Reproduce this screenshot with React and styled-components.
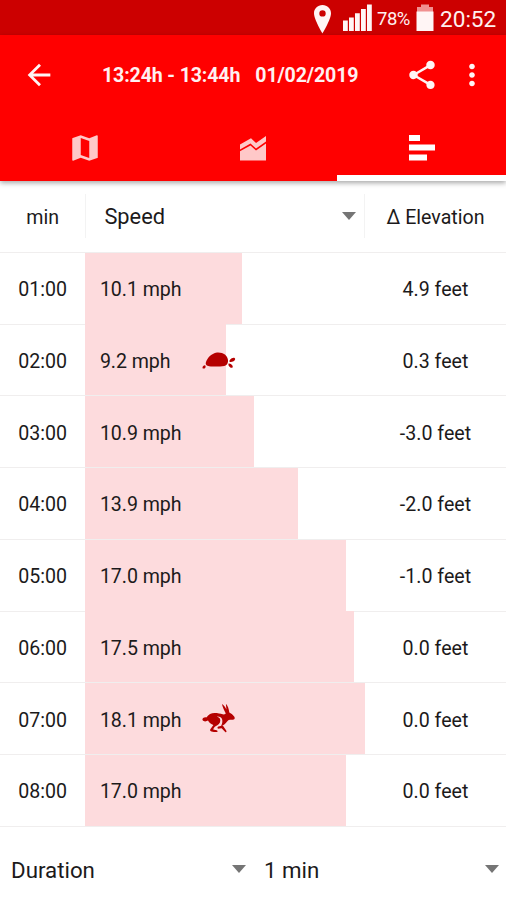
import React from "react";
import styled, { createGlobalStyle } from "styled-components";

const GlobalStyle = createGlobalStyle`
  *, *::before, *::after { box-sizing: border-box; }
  html, body { margin: 0; padding: 0; background: #fff; overflow: hidden; }
  body { font-family: Roboto, sans-serif; color: #1c1a1b; }
`;

const Screen = styled.main`
  width: 506px;
  height: 900px;
  display: flex;
  flex-direction: column;
  background: #fff;
  overflow: hidden;
`;

const StatusBar = styled.div`
  flex: none;
  height: 35px;
  display: flex;
  align-items: center;
  justify-content: flex-end;
  padding: 2px 9px 0 0;
  background: #cc0000;
  color: #fff0f0;
`;

const BatteryLevel = styled.span`
  width: 34px;
  margin: 0 5px 0 5px;
  font-size: 18.5px;
  letter-spacing: -0.5px;
  white-space: nowrap;
`;

const Clock = styled.span`
  width: 57px;
  margin-left: 6px;
  font-size: 22.6px;
  line-height: 33px;
  padding-top: 1px;
  white-space: nowrap;
`;

const Header = styled.header`
  flex: none;
  height: 146px;
  background: #ff0000;
  color: #fff0f0;
  box-shadow: 0 2px 5px rgba(0, 0, 0, 0.35);
`;

const AppBar = styled.div`
  height: 80px;
  display: flex;
  align-items: center;
  padding: 0 17px 0 22px;
`;

const Title = styled.h1`
  flex: 1;
  display: flex;
  gap: 15px;
  margin: 1px 0 0 46px;
  font-size: 19.6px;
  font-weight: 700;
  letter-spacing: -0.14px;
  white-space: nowrap;
`;

const IconButton = styled.button`
  flex: none;
  width: 34px;
  height: 34px;
  margin: 0 ${(p) => p.$gap || 0}px 0 0;
  padding: 0;
  border: 0;
  background: none;
  color: #fff5f5;
  svg { display: block; }
`;

const Tabs = styled.nav`
  height: 66px;
  display: grid;
  grid-template-columns: 169px 168px 169px;
`;

const Tab = styled.button`
  display: flex;
  justify-content: center;
  align-items: flex-start;
  padding: 16px 0 0;
  border: 0;
  border-bottom: 6px solid ${(p) => (p.$active ? "#fff" : "transparent")};
  background: none;
  color: ${(p) => (p.$active ? "#fff" : "#ffc8c8")};
`;

const Row = styled.div`
  flex: none;
  height: 71.75px;
  display: grid;
  grid-template-columns: 85.4px 279.6px 141px;
  align-items: stretch;
  border-bottom: 1px solid #f0eeee;
  font-size: 19.6px;
`;

const HeadRow = styled(Row)`
  height: 71.75px;
`;

const Cell = styled.div`
  display: flex;
  align-items: center;
  justify-content: center;
  padding-top: 3px;
  white-space: nowrap;
`;

const HeadCell = styled(Cell)`
  padding-top: 2px;
`;

const Select = styled.div`
  display: flex;
  align-items: center;
  justify-content: space-between;
  font-size: 22.3px;
`;

const ColumnSelect = styled(Select)`
  margin: 13px 0 14px;
  padding: 2px 8px 0 18px;
  font-size: 21.8px;
  border-left: 1px solid #f3f3f3;
  border-right: 1px solid #f3f3f3;
`;

const Bar = styled.div`
  display: flex;
  align-items: center;
  width: ${(p) => p.$width}px;
  margin-top: -0.25px;
  padding: 3px 0 0 14.5px;
  background: #fddbdd;
  white-space: nowrap;
  svg { flex: none; margin: -2px 0 0 20px; overflow: visible; }
`;

const Footer = styled.footer`
  flex: 1;
  display: grid;
  grid-template-columns: 253px 253px;
  padding-top: 14px;
`;

const FooterSelect = styled(Select)`
  padding: 0 7px 0 11px;
`;

const Caret = styled.span`
  width: 0;
  height: 0;
  margin-top: -2px;
  border: 7px solid transparent;
  border-top: 8px solid #757575;
  border-bottom-width: 0;
`;

const MIcon = ({ d, size = 34 }) => (
  <svg width={size} height={size} viewBox="0 0 24 24" fill="currentColor">
    <path d={d} />
  </svg>
);

const StatusIcons = () => (
  <svg width="62" height="33" viewBox="0 0 62 33" fill="#fff5f5">
    <path
      fillRule="evenodd"
      d="M12.5 3C7.5 3 4 6.7 4 11.3 4 17.5 12.5 31.5 12.5 31.5S21 17.5 21 11.3C21 6.7 17.5 3 12.5 3Zm0 5.2a3.2 3.2 0 1 1 0 6.4 3.2 3.2 0 0 1 0-6.4Z"
    />
    <path d="M33 18.5h4.8V29H33zM39 15.5h4.8V29H39zM45 11.3h4.8V29H45zM51 7h4.8v22H51zM57 2.5h4.8V29H57z" />
  </svg>
);

const Battery = () => (
  <svg width="18" height="33" viewBox="0 0 18 33">
    <path fill="#f09090" d="M5 2.5h8V5h4v5H1V5h4z" />
    <path fill="#fff5f5" d="M.5 9.5h17V29H.5z" />
  </svg>
);

const ChartIcon = () => (
  <svg width="26" height="34" viewBox="0 0 26 34" fill="currentColor">
    <path d="M0 13.4 11 7.3l5 4.6L26 5v5.4l-10 7-5.5-4.8L0 18.5z" />
    <path d="m0 20.3 10.5-5.8 5.5 5 10-7v17H0z" />
  </svg>
);

const BarsIcon = () => (
  <svg width="26" height="34" viewBox="0 0 26 34" fill="currentColor">
    <path d="M0 4h11v6H0zM0 13.5h26v6H0zM0 23.5h18v6H0z" />
  </svg>
);

const Turtle = () => (
  <svg width="34" height="20" viewBox="0 0 34 20" fill="#b50000">
    <path d="M3.8 12.8C5 8.5 9 3.6 15 2.6c6-.5 10.5 2.7 11 7.4.2 2-.3 4-2 5.2-2 1.4-5.2 1.1-8 1.3-4.2.3-7.8 0-10.5-.8-1.4-.5-2-1.4-1.7-2.9Z" />
    <path d="M28 9.8c1.2-1.5 3.5-2.4 4.6-1.7 1.2.8.5 2.4-1 3.2-1.6.8-3.4 1-4 .5-.4-.4-.1-1.2.4-2ZM26.6 13.4c1.8-.2 4.2 1.6 4.2 3.3-.1 1.6-2 1.2-3 .2-1-1-1.8-2-1.2-3.5ZM2.9 15.3c1.1.3.8 1.8.3 2.6-.7.9-2.6.9-2.7-.2 0-1.1 1.2-2.2 2.4-2.4Z" />
  </svg>
);

const Rabbit = () => (
  <svg width="34" height="32" viewBox="0 0 34 32" fill="#b50000">
    <path d="M23.8 10.5C21.8 6.8 20.4 3.5 20 1.1c1.8.9 3.3 3 4.4 5.4L23.9.7c1.9 2.1 3 5.3 3.4 8.7 1.7.9 3.4 2.1 4.4 3.7 1 1 1.5 2.4.5 3.1-1.4.8-3.8.2-5.5.9-1.2.6-2.2 2.6-4.1 4.2-1.2 1-2.4 1.4-3.6 1.8 1.4-2.3 1.7-4.6 1-7-.6-1.7-2.5-2.9-5.2-2.5 2.3.7 3.5 2 3.5 3.8 0 2.9-2.2 4.6-4.7 5.8-1.2.6-1.6 1.6-2.4 3.2l3.4.8c1.5.5 1.5 1.7-.1 1.7-2.7.1-4.7-.2-6-1-1.1-.8.2-2.3 1.1-3.4l1.8-2.5c-2.2-.7-4.4-2.1-5.4-4.4-1.8 1.2-4.8 1-5.5-.5-.5-1.5 1.3-3 3.9-2.7C6.6 11.5 9.2 10 12.6 10c3.2 0 5.8.7 8 1.3 1.2.3 2.3-.1 3.2-.8Z" />
    <path d="m16.4 23.6 4.4-1.2 3.4 5.2c.8 1.4 0 2.3-1.2 1.2l-3.4-3.6-3.6.5c-.9-.6-.7-1.6.4-2.1Z" />
  </svg>
);

const rows = [
  { min: "01:00", speed: "10.1 mph", width: 157, elevation: "4.9 feet" },
  { min: "02:00", speed: "9.2 mph", width: 140.5, elevation: "0.3 feet", slow: true },
  { min: "03:00", speed: "10.9 mph", width: 168.5, elevation: "-3.0 feet" },
  { min: "04:00", speed: "13.9 mph", width: 213, elevation: "-2.0 feet" },
  { min: "05:00", speed: "17.0 mph", width: 260.5, elevation: "-1.0 feet" },
  { min: "06:00", speed: "17.5 mph", width: 269, elevation: "0.0 feet" },
  { min: "07:00", speed: "18.1 mph", width: 280, elevation: "0.0 feet", fast: true },
  { min: "08:00", speed: "17.0 mph", width: 260.5, elevation: "0.0 feet" },
];

const SpeedLabel = styled.span`
  flex: none;
  width: 82px;
  letter-spacing: -0.05px;
`;

export default function App() {
  return (
    <Screen>
      <GlobalStyle />
      <StatusBar>
        <StatusIcons />
        <BatteryLevel>78%</BatteryLevel>
        <Battery />
        <Clock>20:52</Clock>
      </StatusBar>
      <Header>
        <AppBar>
          <IconButton aria-label="Back">
            <MIcon d="M20 11H7.83l5.59-5.59L12 4l-8 8 8 8 1.41-1.41L7.83 13H20v-2z" />
          </IconButton>
          <Title>
            <span>13:24h - 13:44h</span>
            <span>01/02/2019</span>
          </Title>
          <IconButton aria-label="Share" $gap={16}>
            <MIcon d="M18 16.08c-.76 0-1.44.3-1.96.77L8.91 12.7c.05-.23.09-.46.09-.7s-.04-.47-.09-.7l7.05-4.11c.54.5 1.25.81 2.04.81 1.66 0 3-1.34 3-3s-1.34-3-3-3-3 1.34-3 3c0 .24.04.47.09.7L8.04 9.81C7.5 9.31 6.79 9 6 9c-1.66 0-3 1.34-3 3s1.34 3 3 3c.79 0 1.5-.31 2.04-.81l7.12 4.16c-.05.21-.08.43-.08.65 0 1.61 1.31 2.92 2.92 2.92 1.61 0 2.92-1.31 2.92-2.92s-1.31-2.92-2.92-2.92z" />
          </IconButton>
          <IconButton aria-label="More">
            <MIcon d="M12 8c1.1 0 2-.9 2-2s-.9-2-2-2-2 .9-2 2 .9 2 2 2zm0 2c-1.1 0-2 .9-2 2s.9 2 2 2 2-.9 2-2-.9-2-2-2zm0 6c-1.1 0-2 .9-2 2s.9 2 2 2 2-.9 2-2-.9-2-2-2z" />
          </IconButton>
        </AppBar>
        <Tabs>
          <Tab aria-label="Map">
            <MIcon d="M20.5 3l-.16.03L15 5.1 9 3 3.36 4.9c-.21.07-.36.25-.36.48V20.5c0 .28.22.5.5.5l.16-.03L9 18.9l6 2.1 5.64-1.9c.21-.07.36-.25.36-.48V3.5c0-.28-.22-.5-.5-.5zM15 19l-6-2.11V5l6 2.11V19z" />
          </Tab>
          <Tab aria-label="Chart"><ChartIcon /></Tab>
          <Tab aria-label="Intervals" $active><BarsIcon /></Tab>
        </Tabs>
      </Header>
      <HeadRow>
        <HeadCell>min</HeadCell>
        <ColumnSelect>
          Speed
          <Caret />
        </ColumnSelect>
        <HeadCell>Δ Elevation</HeadCell>
      </HeadRow>
      {rows.map((r) => (
        <Row key={r.min}>
          <Cell>{r.min}</Cell>
          <Bar $width={r.width}>
            <SpeedLabel>{r.speed}</SpeedLabel>
            {r.slow && <Turtle />}
            {r.fast && <Rabbit />}
          </Bar>
          <Cell>{r.elevation}</Cell>
        </Row>
      ))}
      <Footer>
        <FooterSelect>
          Duration
          <Caret />
        </FooterSelect>
        <FooterSelect>
          1 min
          <Caret />
        </FooterSelect>
      </Footer>
    </Screen>
  );
}
